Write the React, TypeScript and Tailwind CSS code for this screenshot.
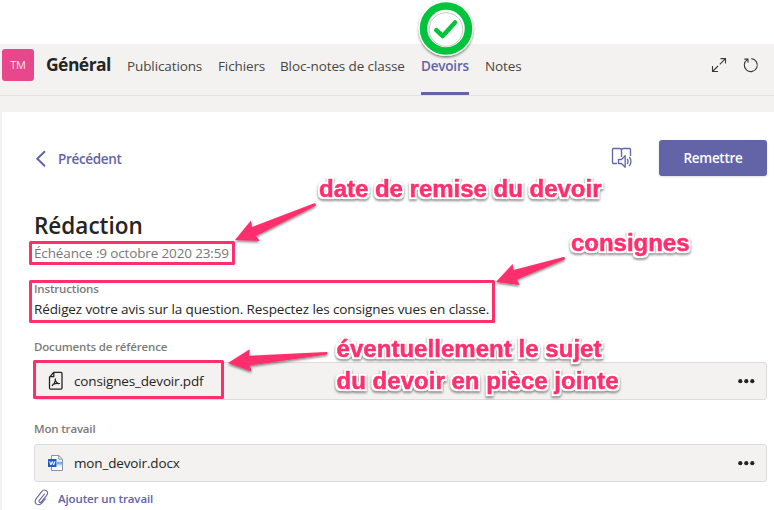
import type { ReactNode } from "react";

function Tab({ children, className, active = false }: { children: ReactNode; className: string; active?: boolean }) {
  return (
    <div className={`relative flex h-[51px] shrink-0 items-start whitespace-nowrap pt-3 text-[13.5px] leading-5 ${active ? "font-semibold tracking-[-0.2px] text-[#6264a7]" : "tracking-[-0.11px] text-[#484644]"} ${className}`}>
      {children}
      {active && <span className="absolute bottom-0 left-0 h-[3px] w-12 bg-[#6264a7]" />}
    </div>
  );
}

function SectionTitle({ children, className }: { children: ReactNode; className: string }) {
  return <h3 className={`h-4 whitespace-nowrap text-[11.5px] font-semibold leading-4 tracking-[-0.17px] text-[#7d7b79] ${className}`}>{children}</h3>;
}

function FileRow({ icon, name }: { icon: ReactNode; name: string }) {
  return (
    <div className="flex h-[38px] w-[733px] items-center rounded-[3px] border border-[#dcdcdf] bg-[#f3f2f1] pl-[13px] pr-[10px]">
      <div className="flex w-[26px] shrink-0">{icon}</div>
      <span className="flex-1 whitespace-nowrap text-[13.5px] leading-5 tracking-[-0.15px] text-[#252423]">{name}</span>
      <svg width="18" height="6" viewBox="0 0 18 6" fill="#252423">
        <circle cx="2.300" cy="3.200" r="2.100" />
        <circle cx="8.300" cy="3.200" r="2.100" />
        <circle cx="14.300" cy="3.200" r="2.100" />
      </svg>
    </div>
  );
}

function PdfIcon() {
  return (
    <svg width="16" height="20" viewBox="0 0 16 20" fill="none" stroke="#252423" strokeWidth="1.300" strokeLinejoin="round" strokeLinecap="round">
      <path d="M5.600 1.300H13q1 0 1 1v14.800q0 1-1 1H2.500q-1 0-1-1V6.300zM5.800 1.500v4.200H1.700" />
      <path d="M7.300 7.800v1.600q-.2 2.700-3 5.100M5 13.400q3-1.400 6.500-.9M7.400 9.500q.8 2.200 3.300 3.300" strokeWidth="1.200" />
    </svg>
  );
}

function WordIcon() {
  return (
    <svg width="16" height="18" viewBox="0 0 16 18">
      <path d="M3.500 1.500h7.300l3.700 3.600v11.400h-11z" fill="#fbfcfd" stroke="#8a93a0" />
      <path d="M10.700 1.500v3.700h3.800" fill="none" stroke="#8a93a0" />
      <path d="M9 6.500h5v1.300H9z" fill="#c5e3f9" />
      <path d="M9 8h5v2H9z" fill="#69b5f0" />
      <path d="M9 10h5v1.500H9z" fill="#a4d2f5" />
      <rect x="0" y="5" width="8.500" height="8" rx=".6" fill="#1b5dbe" />
      <path d="M1.600 7.200l1.300 3.900 1.400-3.700 1.400 3.700L7 7.200" fill="none" stroke="#fff" strokeWidth="1" />
    </svg>
  );
}

function Callout({ x, y, width, children }: { x: number; y: number; width: number; children: string }) {
  return (
    <text x={x} y={y} textLength={width} lengthAdjust="spacing">
      {children}
    </text>
  );
}

function Annotations() {
  return (
    <svg className="pointer-events-none absolute left-0 top-0" width="774" height="510" viewBox="0 0 774 510">
      <defs>
        <filter id="soft" x="-20%" y="-30%" width="140%" height="170%">
          <feDropShadow dx="0" dy="1.500" stdDeviation="1.300" floodColor="#000" floodOpacity=".5" />
        </filter>
        <filter id="outlined" x="-10%" y="-10%" width="120%" height="120%" colorInterpolationFilters="sRGB">
          <feMorphology in="SourceAlpha" operator="dilate" radius="1.500" result="grown" />
          <feGaussianBlur in="grown" stdDeviation=".4" result="smooth" />
          <feFlood floodColor="#fff" />
          <feComposite in2="smooth" operator="in" result="outline" />
          <feMerge result="label">
            <feMergeNode in="outline" />
            <feMergeNode in="SourceGraphic" />
          </feMerge>
          <feDropShadow in="label" dx="0" dy="1.500" stdDeviation="1.300" floodColor="#000" floodOpacity=".5" />
        </filter>
      </defs>
      <g fill="none" stroke="#ff2f6d" strokeWidth="3" strokeLinejoin="round">
        <rect x="30.500" y="242.500" width="203" height="21" />
        <rect x="30.500" y="281.500" width="463" height="40" />
        <rect x="34.500" y="361.500" width="188" height="36" />
      </g>
      <g fill="#ff2f6d" filter="url(#soft)">
        <path d="M235 240 251 220.500 252 227 314.300 203.300Q316.500 203.500 315.700 205.700L256 236 259.700 241z" />
        <path d="M496 282 512.700 264 513.500 270 563.500 257Q565.800 257.200 564.500 259.500L517 279.500 519.700 285z" />
        <path d="M228 363 249.700 349.300 249 355.700 326.500 352Q328.300 353 326.700 354.500L250 365.500 251.500 371.500z" />
      </g>
      <g filter="url(#outlined)" fontFamily="'Liberation Sans', Arial, sans-serif" fontWeight="700" fontSize="24" fill="#ff2f6d" stroke="#ff2f6d" strokeWidth=".5" strokeLinejoin="round">
        <Callout x={319} y={197} width={282.500}>date de remise du devoir</Callout>
        <Callout x={571} y={251} width={118.500}>consignes</Callout>
        <Callout x={336.500} y={357} width={265}>éventuellement le sujet</Callout>
        <Callout x={336.500} y={389} width={282}>du devoir en pièce jointe</Callout>
      </g>
      <g filter="url(#soft)">
        <circle cx="446" cy="28.500" r="27.500" fill="#fff" />
      </g>
      <circle cx="446" cy="28.500" r="22.500" fill="none" stroke="#00c43b" strokeWidth="7.500" />
      <circle cx="446" cy="29.500" r="16.800" fill="none" stroke="#777" strokeOpacity=".4" />
      <path d="M436.300 30.200 442.700 36 455 22.500" fill="none" stroke="#00c43b" strokeWidth="4.500" strokeLinecap="round" strokeLinejoin="round" />
    </svg>
  );
}

export default function App() {
  return (
    <div className="relative h-[510px] w-[774px] overflow-hidden bg-white pt-11 font-['Open_Sans','Noto_Sans',sans-serif]">
      <header className="flex h-[52px] border-b border-[#e4e2e1] bg-[#f3f2f1] pl-[2px]">
        <div className="mt-[5px] flex size-8 shrink-0 items-center justify-center rounded-[3px] bg-[#e8488b] text-[11px] tracking-[-0.2px] text-[#fbe3ee]">TM</div>
        <h1 className="ml-3 mt-2 w-[81px] shrink-0 whitespace-nowrap text-[17.5px] font-bold leading-6 tracking-[-0.55px] text-[#252423]">Général</h1>
        <nav className="flex flex-1">
          <Tab className="w-[91px]">Publications</Tab>
          <Tab className="w-[62px]">Fichiers</Tab>
          <Tab className="w-[141px]">Bloc-notes de classe</Tab>
          <Tab className="w-16" active>Devoirs</Tab>
          <Tab className="w-12">Notes</Tab>
        </nav>
        <div className="mr-[15px] mt-[13px] flex gap-[16px]">
          <svg width="16" height="16" viewBox="0 0 16 16" fill="none" stroke="#3b3a39" strokeWidth="1.100">
            <path d="M9.500 1.600h5v5M14.500 1.600 8.800 7.300M1.500 9v5.500h5.500M1.500 14.500l5.500-5.500" />
          </svg>
          <svg width="16" height="16" viewBox="0 0 16 16" fill="none" stroke="#3b3a39" strokeWidth="1.100">
            <path d="M8.300 1.600A6.500 6.500 0 1 1 4.300 2.600M1.300 2.100h3.700v3.700" />
          </svg>
        </div>
      </header>
      <div className="h-4 bg-[#f3f2f1]" />
      <main className="h-[398px] border-l-2 border-[#f3f2f1] pl-8">
        <div className="flex h-[92px] items-start justify-between pr-[7px] pt-7">
          <div className="flex items-center pt-[9px] text-[#6264a7]">
            <svg width="24" height="18" viewBox="0 0 24 18" fill="none" stroke="#6264a7" strokeWidth="2">
              <path d="M11 1.200 3.300 8.700l7.700 7.500" />
            </svg>
            <span className="text-[13.5px] font-semibold leading-5 tracking-[-0.32px]">Précédent</span>
          </div>
          <div className="flex items-start">
            <svg className="mr-[26px] mt-[7px]" width="22" height="22" viewBox="0 0 22 22" fill="none" stroke="#6264a7" strokeWidth="1.300" strokeLinejoin="round">
              <path d="M6 16.500H2.500q-1 0-1-1v-13q0-1 1-1H8.500q2 0 2 2v6.500M10.500 3.500q0-2 2-2h6q1 0 1 1v6.500" />
              <path d="M7.500 12.500h3l3.700-3.700v11.400l-3.700-3.700h-3zM16.200 12q1.800 2.500 0 5M18.300 10q3.300 4.500 0 9" />
            </svg>
            <button className="flex h-9 w-[108px] items-center justify-center rounded-[3px] bg-[#6264a7] text-[13.5px] font-semibold tracking-[-0.3px] text-white shadow">Remettre</button>
          </div>
        </div>
        <h2 className="h-[39px] pt-[6px] text-[22.5px] font-semibold leading-8 text-[#252423]">Rédaction</h2>
        <p className="h-5 whitespace-nowrap text-[13.5px] leading-5 tracking-[-0.14px] text-[#7a7876]">Échéance :9 octobre 2020 23:59</p>
        <SectionTitle className="mt-[18px]">Instructions</SectionTitle>
        <p className="mt-[2px] h-5 whitespace-nowrap text-[13.5px] leading-5 tracking-[-0.11px] text-[#252423]">Rédigez votre avis sur la question. Respectez les consignes vues en classe.</p>
        <SectionTitle className="mt-5">Documents de référence</SectionTitle>
        <div className="mt-[7px]">
          <FileRow icon={<PdfIcon />} name="consignes_devoir.pdf" />
        </div>
        <SectionTitle className="mt-[21px]">Mon travail</SectionTitle>
        <div className="mt-[7px]">
          <FileRow icon={<WordIcon />} name="mon_devoir.docx" />
        </div>
        <div className="mt-[7px] flex items-start text-[#6264a7]">
          <svg className="mr-2" width="16" height="18" viewBox="0 0 16 18" fill="none" stroke="#6264a7" strokeWidth="1.100" strokeLinecap="round">
            <path d="M10.500 5 5.200 11.300q-.7 1.200.3 1.900 1 .6 1.800-.4l5.400-6.500q2-2.800-.4-4.700-2.400-1.500-4.400.7L2.200 9.600q-2.300 3.300.4 5.500 2.900 1.700 5.200-.9l3.500-4.200" />
          </svg>
          <span className="pt-[2px] text-[11.5px] font-semibold leading-4 tracking-[-0.12px]">Ajouter un travail</span>
        </div>
      </main>
      <Annotations />
    </div>
  );
}
